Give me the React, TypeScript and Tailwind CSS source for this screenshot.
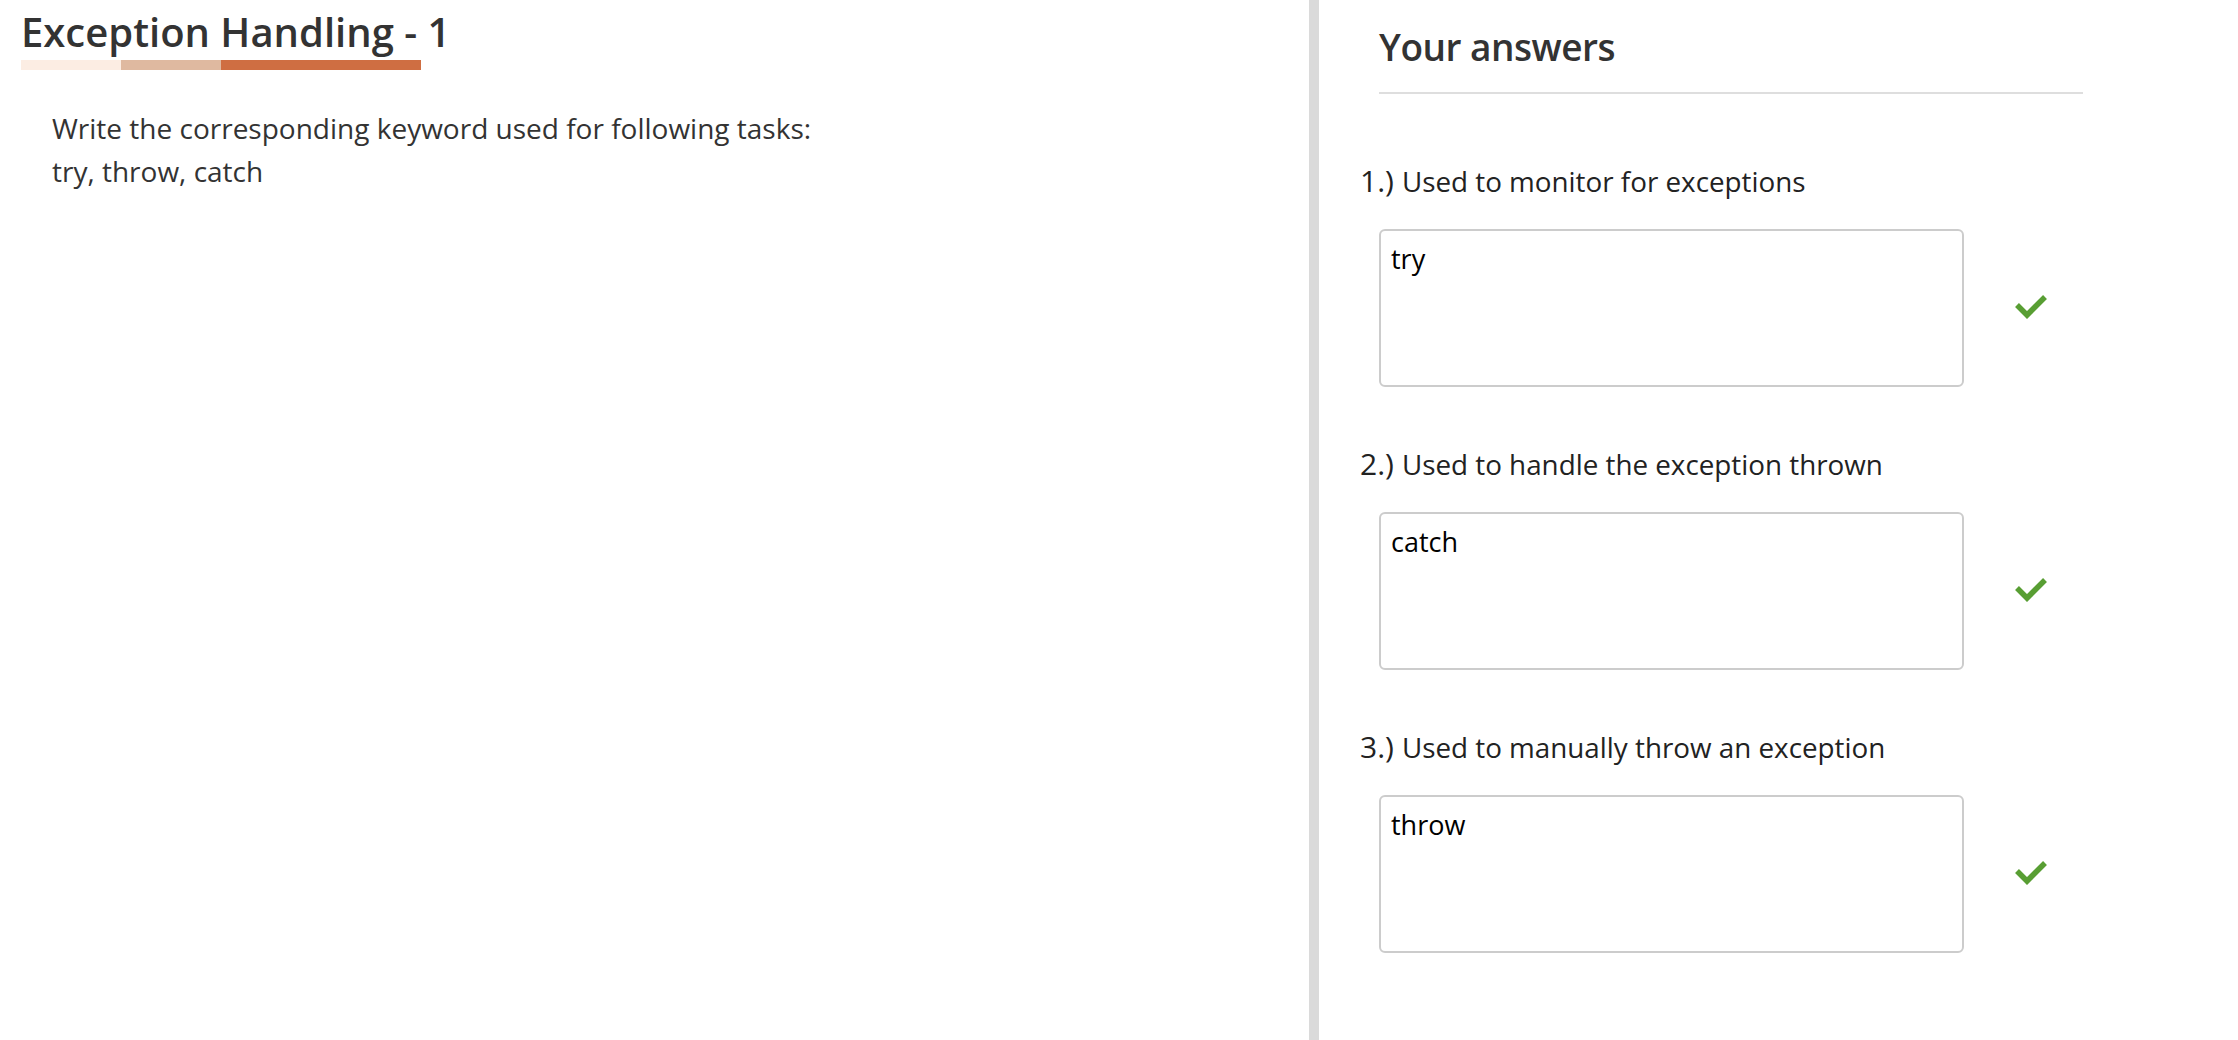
import React from 'react';

const answers = [
  { num: '1.)', question: 'Used to monitor for exceptions', value: 'try' },
  { num: '2.)', question: 'Used to handle the exception thrown', value: 'catch' },
  { num: '3.)', question: 'Used to manually throw an exception', value: 'throw' },
];

const CheckMark: React.FC = () => (
  <svg width="34" height="26" viewBox="0 0 34 26" className="ml-[50px] shrink-0">
    <polyline
      points="3,10 13,20 31,2"
      fill="none"
      stroke="#589e33"
      strokeWidth="5.5"
    />
  </svg>
);

export default function App() {
  return (
    <div className="flex min-h-screen w-full bg-white font-['Open_Sans',sans-serif]">
      {/* Task panel */}
      <div className="w-[1309px] shrink-0 pl-[21px] pt-[8px]">
        <h1 className="text-[40px] font-semibold leading-[48px] text-[#333333]">
          Exception Handling - 1
        </h1>
        <div className="mt-[4px] flex h-[10px] w-[400px]">
          <div className="w-[100px] bg-[#fcede3]" />
          <div className="w-[100px] bg-[#dfb9a0]" />
          <div className="w-[200px] bg-[#cf6e42]" />
        </div>
        <div className="mt-[37px] pl-[31px] text-[28px] leading-[43px] text-[#333333]">
          <p>Write the corresponding keyword used for following tasks:</p>
          <p>try, throw, catch</p>
        </div>
      </div>

      <div className="w-[10px] shrink-0 bg-[#dadada]" />

      {/* Answers panel */}
      <div className="flex-1 pt-[24px]">
        <div className="pl-[60px]">
          <h2 className="text-[37px] font-semibold leading-[46px] tracking-[-0.5px] text-[#333333]">
            Your answers
          </h2>
          <div className="mt-[22px] h-[2px] w-[704px] bg-[#dedede]" />
        </div>

        <div className="mt-[69px] pl-[41px]">
          {answers.map((a, i) => (
            <div key={a.num} className={i > 0 ? 'mt-[59px]' : ''}>
              <div className="flex h-[36px] items-baseline leading-[36px] text-[#222222]">
                <span className="mr-[8px] text-[30px]">{a.num}</span>
                <span className="text-[27.8px]">{a.question}</span>
              </div>
              <div className="mt-[30px] flex items-center pl-[19px]">
                <textarea
                  readOnly
                  defaultValue={a.value}
                  className="h-[158px] w-[585px] resize-none rounded-[6px] border-2 border-[#cccccc] px-[10px] py-[10px] text-[27px] leading-[36px] text-black outline-none"
                />
                <CheckMark />
              </div>
            </div>
          ))}
        </div>
      </div>
    </div>
  );
}
